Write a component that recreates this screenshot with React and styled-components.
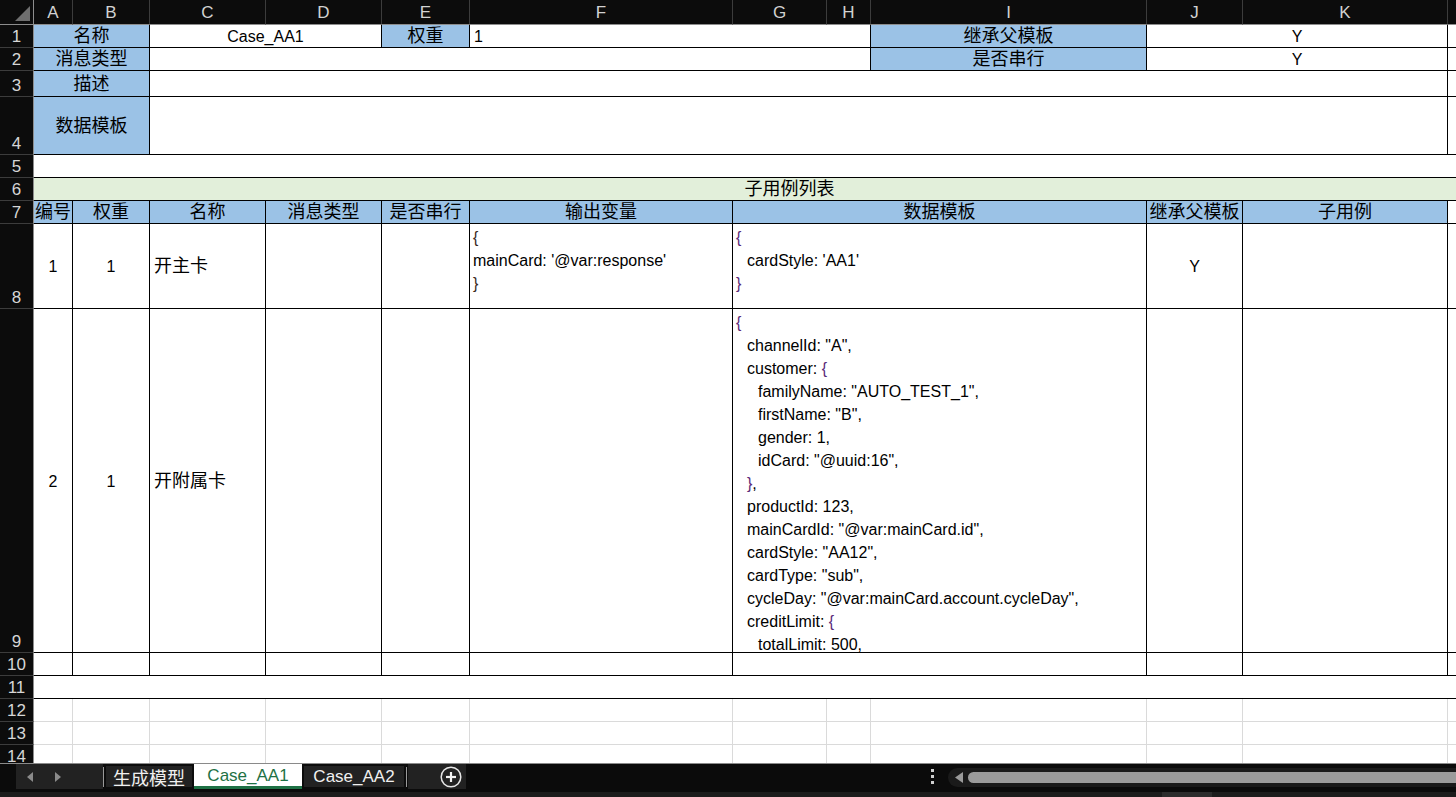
import React from 'react';
import styled, { createGlobalStyle } from 'styled-components';

const FONT = `"Liberation Sans", "Noto Sans CJK SC", sans-serif`;

const GlobalStyle = createGlobalStyle`
  html, body { margin: 0; padding: 0; background: #0b0b0b; overflow: hidden; }
  #root { width: 1456px; height: 797px; }
`;

const COLS = [34, 39, 77, 116, 116, 88, 263, 94, 44, 276, 96, 205];
const ROWS = [25, 23, 23, 26, 58, 23, 23, 23, 85, 344, 23, 23, 23, 23, 23];
const LETTERS = 'ABCDEFGHIJKL';

const FILLS = { white: '#ffffff', blue: '#9bc2e6', green: '#e2efda' };
const LINES = { black: '#000000', gray: '#dadada', none: 'transparent' };

const Page = styled.div`
  width: 1456px;
  height: 797px;
  display: flex;
  flex-direction: column;
  overflow: hidden;
  font-family: ${FONT};
  background: #0b0b0b;
`;

const Sheet = styled.div`
  height: 763px;
  flex: none;
  display: grid;
  grid-template-columns: ${COLS.map((w) => w + 'px').join(' ')} 1fr;
  grid-template-rows: ${ROWS.map((h) => h + 'px').join(' ')};
  overflow: hidden;
  background: #ffffff;
`;

const Corner = styled.div`
  grid-column: 1;
  grid-row: 1;
  box-sizing: border-box;
  background: #0c0c0c;
  border-right: 1px solid #8d8d8d;
  border-bottom: 1px solid #8d8d8d;
  display: flex;
  align-items: flex-end;
  justify-content: flex-end;
  padding: 0 3px 3px 0;
`;

const ColHead = styled.div`
  grid-column: ${(p) => p.$c};
  grid-row: 1;
  box-sizing: border-box;
  background: #0c0c0c;
  color: #d2d2d2;
  border-right: 1px solid #3c3c3c;
  border-bottom: 1px solid #8d8d8d;
  display: flex;
  align-items: center;
  justify-content: center;
  font-size: 17px;
  line-height: 22px;
  padding-top: 2px;
`;

const RowHead = styled.div`
  grid-column: 1;
  grid-row: ${(p) => p.$r};
  box-sizing: border-box;
  background: #0c0c0c;
  color: #d6d6d6;
  border-right: 1px solid #8d8d8d;
  border-bottom: 1px solid #3c3c3c;
  display: flex;
  align-items: flex-end;
  justify-content: center;
  font-size: 17px;
  line-height: 21px;
`;

const Cell = styled.div`
  grid-column: ${(p) => p.$c} / span ${(p) => p.$s || 1};
  grid-row: ${(p) => p.$r};
  box-sizing: border-box;
  min-width: 0;
  background: ${(p) => FILLS[p.$fill || 'white']};
  border-right: 1px solid ${(p) => LINES[p.$right || 'black']};
  border-bottom: 1px solid ${(p) => LINES[p.$bottom || 'black']};
  display: flex;
  align-items: ${(p) => (p.$top ? 'flex-start' : 'center')};
  justify-content: ${(p) => (p.$left || p.$top ? 'flex-start' : 'center')};
  padding: ${(p) => (p.$top ? '2px 3px 0' : `1px 4px 0 ${p.$shift || 4}px`)};
  font-size: ${(p) => (p.$cjk ? '18px' : '16px')};
  line-height: 23px;
  color: #000000;
  white-space: nowrap;
  overflow: hidden;
`;

const CodeBlock = styled.div`
  display: flex;
  flex-direction: column;
  font-size: 16px;
  line-height: 23px;
  color: #000000;
`;

const CodeLine = styled.div`
  padding-left: ${(p) => p.$indent * 11}px;
  white-space: pre;
`;

const Brace = styled.span`
  color: ${(p) => p.$color};
`;

const TabBar = styled.div`
  height: 29px;
  flex: none;
  box-sizing: border-box;
  border-top: 1px solid #8a8a8a;
  background: #0b0b0b;
  display: flex;
  align-items: flex-start;
`;

const Nav = styled.div`
  margin-left: 16px;
  width: 87px;
  height: 25px;
  background: #222222;
  display: flex;
  align-items: center;
  padding-left: 11px;
  gap: 22px;
  box-sizing: border-box;
`;

const Divider = styled.div`
  width: 1px;
  height: 20px;
  margin-top: 3px;
  background: #9a9a9a;
`;

const Tab = styled.div`
  width: ${(p) => p.$w}px;
  height: 25px;
  box-sizing: border-box;
  display: flex;
  align-items: center;
  justify-content: center;
  font-size: ${(p) => (p.$cjk ? '18px' : '17px')};
  background: ${(p) => (p.$active ? '#ffffff' : '#222222')};
  color: ${(p) => (p.$active ? '#1e7145' : '#f0f0f0')};
  border: ${(p) => (p.$active ? 'none' : '2px solid #0c0c0c')};
  border-bottom: ${(p) => (p.$active ? '3px solid #1e7145' : '2px solid #0c0c0c')};
  padding-top: ${(p) => (p.$active ? '2px' : '0')};
`;

const AddArea = styled.div`
  margin-left: 1px;
  width: 58px;
  height: 25px;
  background: #222222;
  display: flex;
  align-items: center;
  padding-left: 32px;
  box-sizing: border-box;
`;

const Spacer = styled.div`
  flex: 1;
`;

const Dots = styled.div`
  width: 16px;
  height: 25px;
  margin-right: 8px;
  display: flex;
  flex-direction: column;
  align-items: center;
  justify-content: center;
  gap: 3px;
`;

const Dot = styled.div`
  width: 3px;
  height: 3px;
  background: #d0d0d0;
`;

const Track = styled.div`
  width: 508px;
  height: 19px;
  margin-top: 4px;
  background: #1a1a1a;
  border-radius: 10px 0 0 10px;
  display: flex;
  align-items: center;
  padding-left: 7px;
  box-sizing: border-box;
  gap: 5px;
`;

const Thumb = styled.div`
  flex: 1;
  height: 11px;
  background: #9b9b9b;
  border-radius: 6px 0 0 6px;
`;

const Strip = styled.div`
  height: 5px;
  flex: none;
  background: #1c1c1c;
  padding-left: 1162px;
  display: flex;
`;

const StripBlock = styled.div`
  width: 50px;
  background: #2c2c2c;
`;

const col = (l) => LETTERS.indexOf(l) + 2;

const code = (lines) =>
  lines.map((ln) => {
    const m = ln.match(/^ */)[0].length;
    return { indent: m / 2, text: ln.trim() };
  });

const F8 = code(['{', "mainCard: '@var:response'", '}']);
const G8 = code(['{', "  cardStyle: 'AA1'", '}']);
const G9 = code([
  '{',
  '  channelId: "A",',
  '  customer: {',
  '    familyName: "AUTO_TEST_1",',
  '    firstName: "B",',
  '    gender: 1,',
  '    idCard: "@uuid:16",',
  '  },',
  '  productId: 123,',
  '  mainCardId: "@var:mainCard.id",',
  '  cardStyle: "AA12",',
  '  cardType: "sub",',
  '  cycleDay: "@var:mainCard.account.cycleDay",',
  '  creditLimit: {',
  '    totalLimit: 500,',
]);

const B = 'blue';
const CELLS = [
  // row 1
  { r: 1, c: 'A', s: 2, fill: B, t: '名称', cjk: true },
  { r: 1, c: 'C', s: 2, t: 'Case_AA1' },
  { r: 1, c: 'E', fill: B, t: '权重', cjk: true },
  { r: 1, c: 'F', s: 3, t: '1', left: true },
  { r: 1, c: 'I', fill: B, t: '继承父模板', cjk: true },
  { r: 1, c: 'J', s: 2, t: 'Y' },
  { r: 1, c: 'L', right: 'none' },
  // row 2
  { r: 2, c: 'A', s: 2, fill: B, t: '消息类型', cjk: true },
  { r: 2, c: 'C', s: 6 },
  { r: 2, c: 'I', fill: B, t: '是否串行', cjk: true },
  { r: 2, c: 'J', s: 2, t: 'Y' },
  { r: 2, c: 'L', right: 'none' },
  // row 3
  { r: 3, c: 'A', s: 2, fill: B, t: '描述', cjk: true },
  { r: 3, c: 'C', s: 9 },
  { r: 3, c: 'L', right: 'none' },
  // row 4
  { r: 4, c: 'A', s: 2, fill: B, t: '数据模板', cjk: true },
  { r: 4, c: 'C', s: 9 },
  { r: 4, c: 'L', right: 'none' },
  // row 5
  { r: 5, c: 'A', s: 12, right: 'none' },
  // row 6
  { r: 6, c: 'A', s: 12, fill: 'green', right: 'none', t: '子用例列表', cjk: true, shift: 93 },
  // row 7
  { r: 7, c: 'A', fill: B, t: '编号', cjk: true },
  { r: 7, c: 'B', fill: B, t: '权重', cjk: true },
  { r: 7, c: 'C', fill: B, t: '名称', cjk: true },
  { r: 7, c: 'D', fill: B, t: '消息类型', cjk: true },
  { r: 7, c: 'E', fill: B, t: '是否串行', cjk: true },
  { r: 7, c: 'F', fill: B, t: '输出变量', cjk: true },
  { r: 7, c: 'G', s: 3, fill: B, t: '数据模板', cjk: true },
  { r: 7, c: 'J', fill: B, t: '继承父模板', cjk: true },
  { r: 7, c: 'K', fill: B, t: '子用例', cjk: true },
  { r: 7, c: 'L', right: 'none' },
  // row 8
  { r: 8, c: 'A', t: '1' },
  { r: 8, c: 'B', t: '1' },
  { r: 8, c: 'C', t: '开主卡', cjk: true, left: true },
  { r: 8, c: 'D' },
  { r: 8, c: 'E' },
  { r: 8, c: 'F', code: F8, brace: '#3a2a1c' },
  { r: 8, c: 'G', s: 3, code: G8, brace: '#5a2a78' },
  { r: 8, c: 'J', t: 'Y' },
  { r: 8, c: 'K' },
  { r: 8, c: 'L', right: 'none' },
  // row 9
  { r: 9, c: 'A', t: '2' },
  { r: 9, c: 'B', t: '1' },
  { r: 9, c: 'C', t: '开附属卡', cjk: true, left: true },
  { r: 9, c: 'D' },
  { r: 9, c: 'E' },
  { r: 9, c: 'F' },
  { r: 9, c: 'G', s: 3, code: G9, brace: '#5a2a78' },
  { r: 9, c: 'J' },
  { r: 9, c: 'K' },
  { r: 9, c: 'L', right: 'none' },
  // row 10
  ...['A', 'B', 'C', 'D', 'E', 'F'].map((c) => ({ r: 10, c })),
  { r: 10, c: 'G', s: 3 },
  { r: 10, c: 'J' },
  { r: 10, c: 'K' },
  { r: 10, c: 'L', right: 'none' },
  // row 11
  { r: 11, c: 'A', s: 12, right: 'none' },
  // rows 12-14 plain grid
  ...[12, 13, 14].flatMap((r) =>
    LETTERS.split('').map((c) => ({ r, c, right: c === 'L' ? 'none' : 'gray', bottom: 'gray' }))
  ),
];

const renderLine = (text, color) =>
  text.split(/([{}])/).map((part, i) =>
    part === '{' || part === '}' ? (
      <Brace key={i} $color={color}>
        {part}
      </Brace>
    ) : (
      part
    )
  );

const CornerMark = () => (
  <svg width="15" height="15" viewBox="0 0 15 15">
    <polygon points="15,0 15,15 0,15" fill="#6e6e6e" />
  </svg>
);

const Arrow = ({ dir }) => (
  <svg width="6" height="10" viewBox="0 0 6 10">
    <polygon points={dir === 'left' ? '6,0 6,10 0,5' : '0,0 0,10 6,5'} fill="#8a8a8a" />
  </svg>
);

const PlusCircle = () => (
  <svg width="22" height="22" viewBox="0 0 22 22">
    <circle cx="11" cy="11" r="9.8" fill="none" stroke="#e6e6e6" strokeWidth="1.5" />
    <line x1="6" y1="11" x2="16" y2="11" stroke="#f2f2f2" strokeWidth="2.2" />
    <line x1="11" y1="6" x2="11" y2="16" stroke="#f2f2f2" strokeWidth="2.2" />
  </svg>
);

const ScrollArrow = () => (
  <svg width="8" height="11" viewBox="0 0 8 11">
    <polygon points="8,0 8,11 0,5.5" fill="#9b9b9b" />
  </svg>
);

export default function App() {
  return (
    <>
      <GlobalStyle />
      <Page>
        <Sheet>
          <Corner>
            <CornerMark />
          </Corner>
          {LETTERS.split('').map((l, i) => (
            <ColHead key={l} $c={i + 2}>
              {l === 'L' ? '' : l}
            </ColHead>
          ))}
          {Array.from({ length: 14 }, (_, i) => (
            <RowHead key={i} $r={i + 2}>
              {i + 1}
            </RowHead>
          ))}
          {CELLS.map((cell, i) => (
            <Cell
              key={i}
              $r={cell.r + 1}
              $c={col(cell.c)}
              $s={cell.s}
              $fill={cell.fill}
              $right={cell.right}
              $bottom={cell.bottom}
              $cjk={cell.cjk}
              $left={cell.left}
              $top={!!cell.code}
              $shift={cell.shift}
            >
              {cell.code ? (
                <CodeBlock>
                  {cell.code.map((ln, j) => (
                    <CodeLine key={j} $indent={ln.indent}>
                      {renderLine(ln.text, cell.brace)}
                    </CodeLine>
                  ))}
                </CodeBlock>
              ) : (
                cell.t
              )}
            </Cell>
          ))}
        </Sheet>
        <TabBar>
          <Nav>
            <Arrow dir="left" />
            <Arrow dir="right" />
          </Nav>
          <Divider />
          <Tab $w={90} $cjk>
            生成模型
          </Tab>
          <Tab $w={108} $active>
            Case_AA1
          </Tab>
          <Tab $w={104}>Case_AA2</Tab>
          <Divider />
          <AddArea>
            <PlusCircle />
          </AddArea>
          <Spacer />
          <Dots>
            <Dot />
            <Dot />
            <Dot />
          </Dots>
          <Track>
            <ScrollArrow />
            <Thumb />
          </Track>
        </TabBar>
        <Strip>
          <StripBlock />
        </Strip>
      </Page>
    </>
  );
}
